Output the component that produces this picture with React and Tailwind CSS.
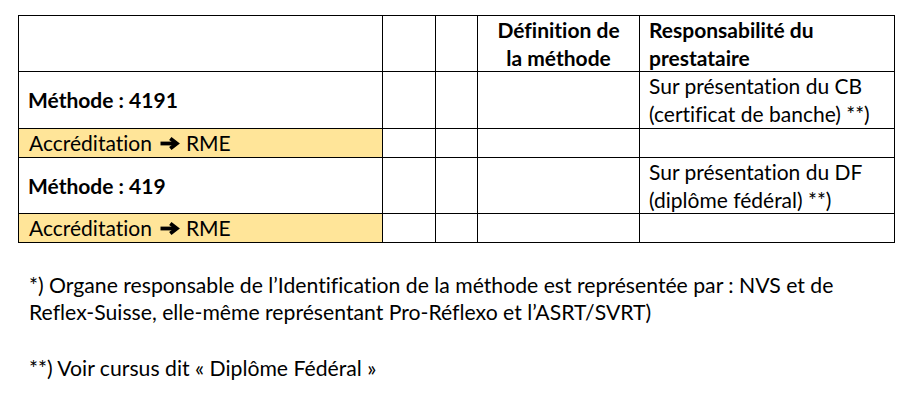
const cell = 'border-r border-b border-black';

function Arrow() {
  return (
    <svg width="20" height="13" viewBox="0 0 20 13" className="inline-block align-[-1px] ml-[8px] mr-[6px]">
      <line x1="0.5" y1="6.5" x2="16" y2="6.5" stroke="black" strokeWidth="3.8" />
      <polyline points="10.3,1.5 16.8,6.5 10.3,11.5" fill="none" stroke="black" strokeWidth="3.8" strokeLinejoin="miter" />
    </svg>
  );
}

function AccreditationRow() {
  return (
    <>
      <div className={`${cell} bg-[#ffe599] pl-[10px] flex items-center`}>
        <span>Accréditation</span>
        <Arrow />
        <span>RME</span>
      </div>
      <div className={cell} />
      <div className={cell} />
      <div className={cell} />
      <div className={cell} />
    </>
  );
}

export default function App() {
  return (
    <div className="w-[913px] h-[400px] bg-white text-black text-[21px] leading-[28px] font-['Lato',sans-serif] [font-variant-ligatures:none] overflow-hidden">
      <div className="pt-[15px] pl-[18px]">
        <div className="grid grid-cols-[364px_53px_42px_162px_255px] grid-rows-[56px_57px_29px_56px_29px] w-[877px] border-t border-l border-black">
          {/* header */}
          <div className={cell} />
          <div className={cell} />
          <div className={cell} />
          <div className={`${cell} font-bold text-center`}>
            Définition de
            <br />
            la méthode
          </div>
          <div className={`${cell} font-bold pl-[9px]`}>
            Responsabilité du
            <br />
            prestataire
          </div>

          {/* méthode 4191 */}
          <div className={`${cell} font-bold pl-[9px] flex items-center`}>Méthode : 4191</div>
          <div className={cell} />
          <div className={cell} />
          <div className={cell} />
          <div className={`${cell} pl-[9px]`}>
            Sur présentation du CB
            <br />
            (certificat de banche) **)
          </div>

          <AccreditationRow />

          {/* méthode 419 */}
          <div className={`${cell} font-bold pl-[9px] flex items-center`}>Méthode : 419</div>
          <div className={cell} />
          <div className={cell} />
          <div className={cell} />
          <div className={`${cell} pl-[9px]`}>
            Sur présentation du DF
            <br />
            (diplôme fédéral) **)
          </div>

          <AccreditationRow />
        </div>
      </div>

      <div className="pl-[29px] mt-[29px] text-[21.2px] leading-[27px]">
        <p>
          *) Organe responsable de l’Identification de la méthode est représentée par : NVS et de
          <br />
          Reflex-Suisse, elle-même représentant Pro-Réflexo et l’ASRT/SVRT)
        </p>
        <p className="mt-[29px]">**) Voir cursus dit « Diplôme Fédéral »</p>
      </div>
    </div>
  );
}
